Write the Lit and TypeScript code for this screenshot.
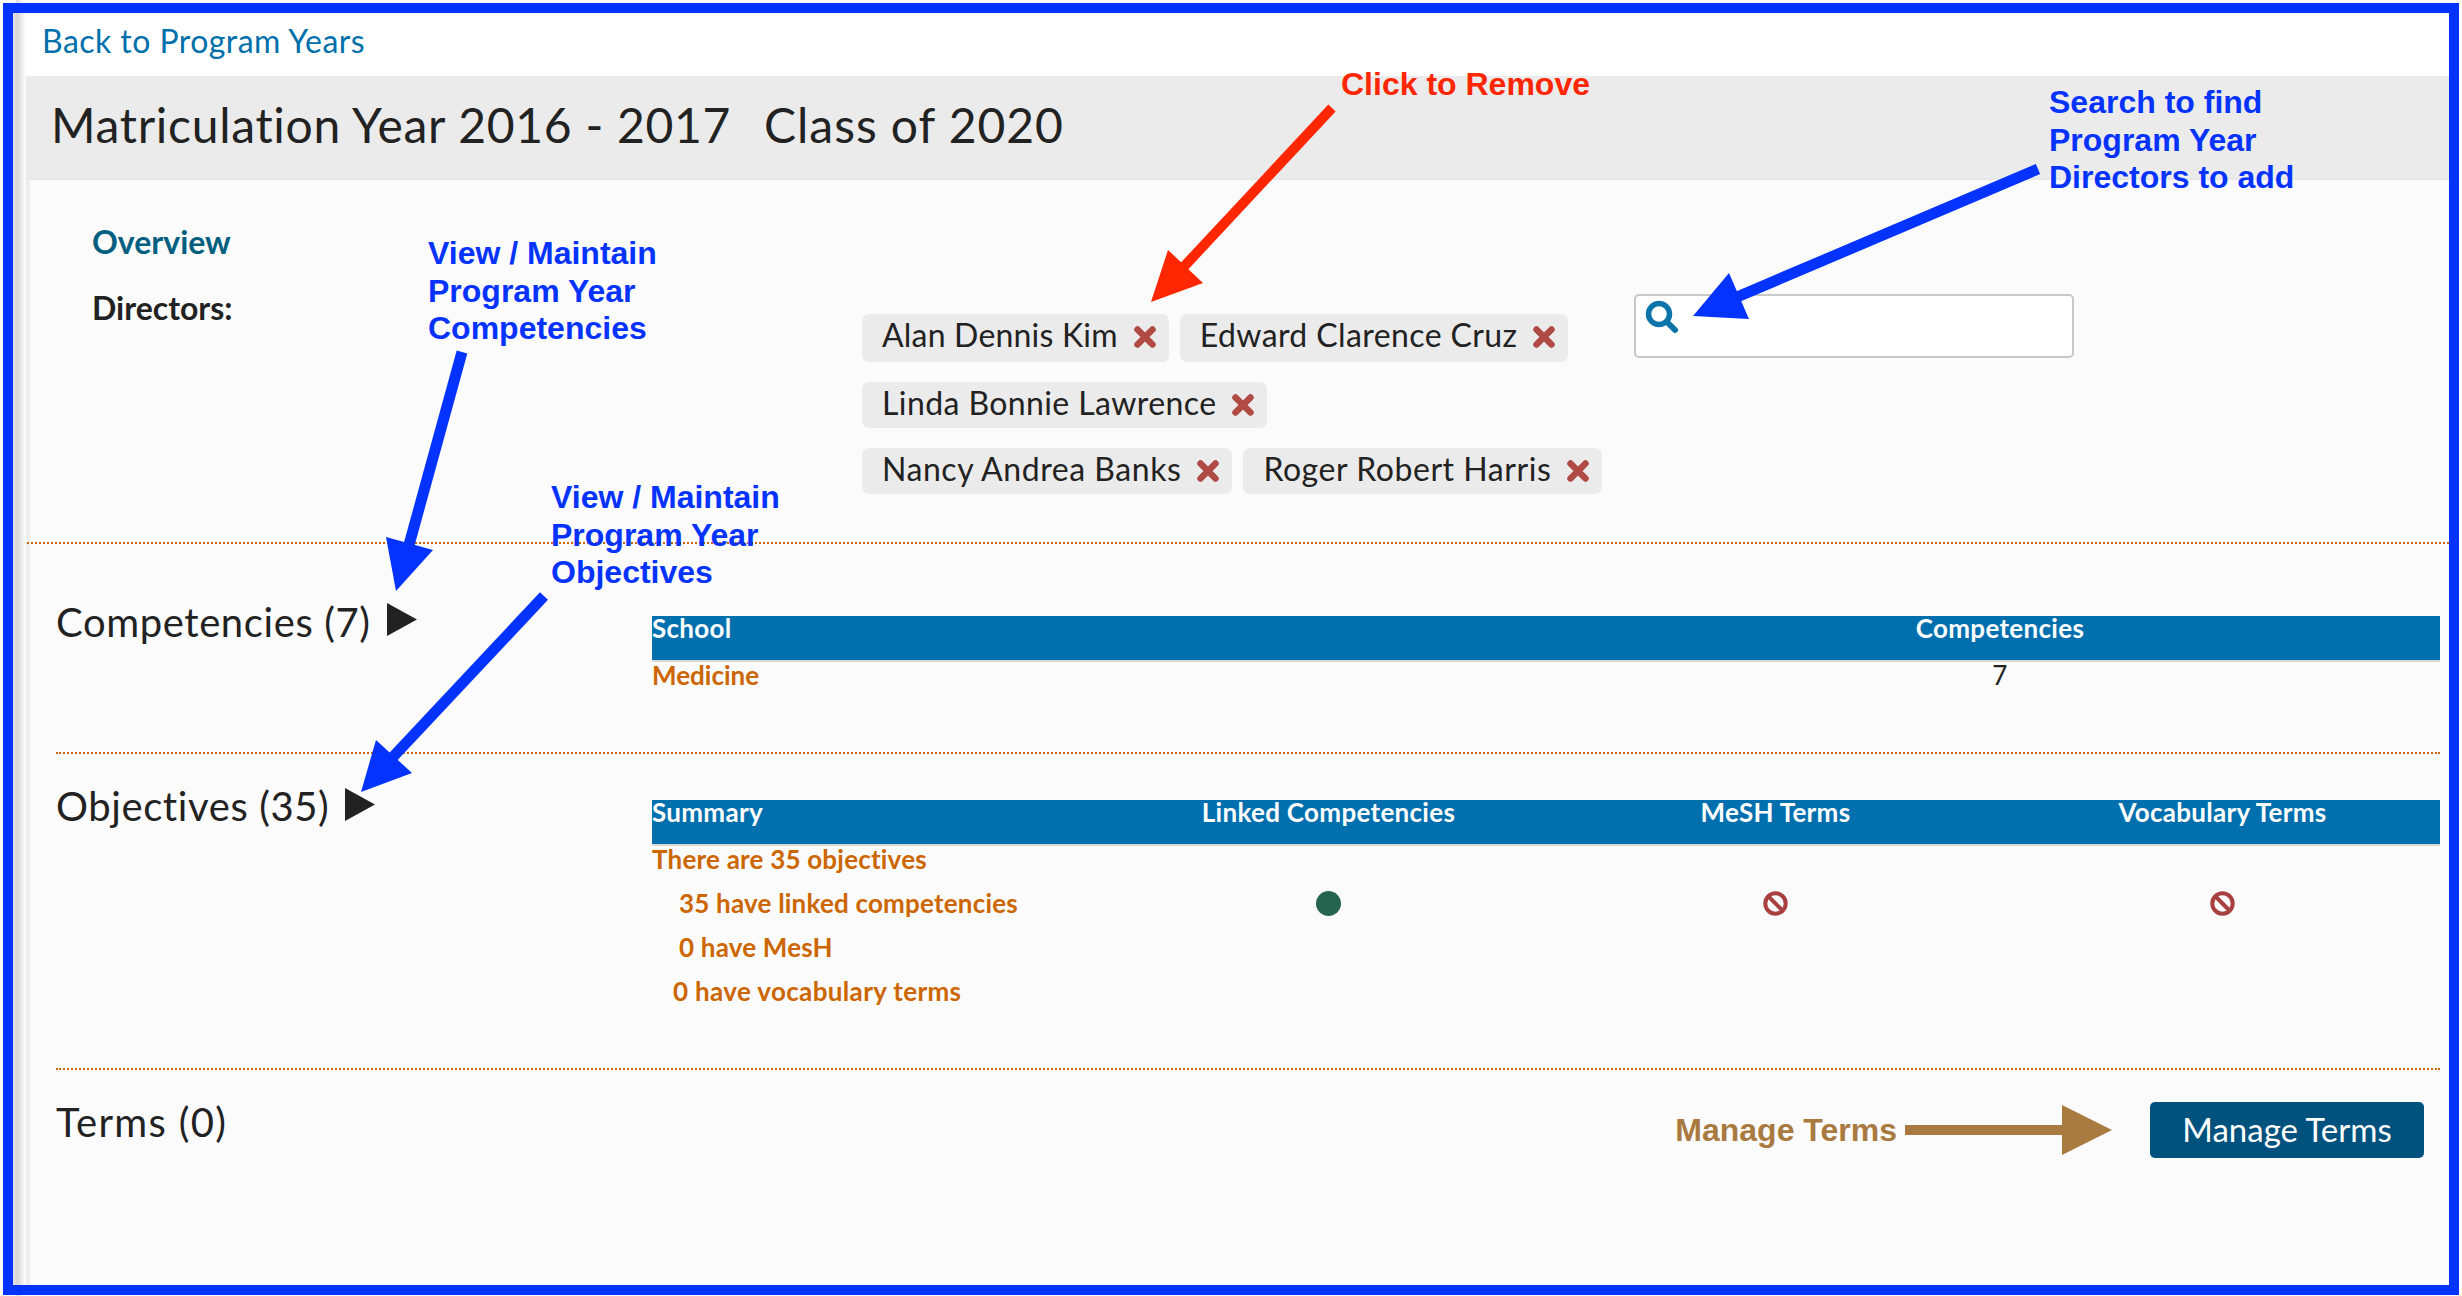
import { LitElement, html, css, svg } from "lit";
import { customElement } from "lit/decorators.js";
import { styleMap } from "lit/directives/style-map.js";

const BLUE = "#0433ff";
const RED = "#ff2600";

const arrows = [
  { c: RED, w: 10, s: [1332, 108], e: [1178, 273], h: "1151,302 1168,250 1203,283" },
  { c: BLUE, w: 11, s: [2038, 169], e: [1730, 300], h: "1693,316 1729,273 1749,319" },
  { c: BLUE, w: 11, s: [462, 352], e: [409, 545], h: "396,591 386,537 433,550" },
  { c: BLUE, w: 11, s: [544, 596], e: [392, 758], h: "361,792 376,740 412,773" },
];

const tagRows = [
  { tall: true, names: [{ n: "Alan Dennis Kim", s: 0.2 }, { n: "Edward Clarence Cruz", s: 0.4 }] },
  { tall: false, names: [{ n: "Linda Bonnie Lawrence", s: 0.4 }] },
  { tall: false, names: [{ n: "Nancy Andrea Banks", s: 0.55 }, { n: "Roger Robert Harris", s: 0.55 }] },
];

@customElement("app-root")
export class AppRoot extends LitElement {
  static styles = css`
    :host {
      display: block;
      position: relative;
      width: 2462px;
      height: 1296px;
      overflow: hidden;
      background: linear-gradient(90deg, #fff 15px, #ddd 17px, #fff 24px);
      font-family: Lato, "Noto Sans", sans-serif;
      color: #222;
    }
    .frame {
      box-sizing: border-box;
      width: 2456px;
      height: 1292px;
      margin: 3px 0 0 3px;
      border: 10px solid #0433ff;
      display: flex;
      background: #fff;
    }
    .gutter {
      width: 13px;
      flex: none;
      background: linear-gradient(90deg, #e4e4e4 0, #d4d4d4 4px, #fff 13px);
    }
    .main { flex: 1; display: flex; flex-direction: column; min-width: 0; }
    .back {
      height: 63px;
      box-sizing: border-box;
      padding: 9px 0 0 16px;
      font-size: 32px;
      letter-spacing: 0.45px;
      line-height: 38px;
      color: #0070ab;
    }
    .title {
      box-sizing: border-box;
      height: 104px;
      background: #ebebeb;
      border-bottom: 2px dotted #e2e2e2;
      padding: 0 0 5px 25px;
      display: flex;
      gap: 33px;
      align-items: center;
      font-size: 48px;
      letter-spacing: 0.7px;
      line-height: 90px;
      white-space: pre;
    }
    .cls { letter-spacing: 0.95px; }
    .body {
      flex: 1;
      background: #fbfbfb;
      box-shadow: inset 4px 0 0 #eee;
      display: flex;
      flex-direction: column;
    }
    .overview {
      box-sizing: border-box;
      height: 364px;
      border-bottom: 2px dotted #cc6600;
      margin-left: 1px;
      display: grid;
      grid-template-columns: 835px 772px 440px;
    }
    .labels { padding: 40px 0 0 65px; font-weight: 700; font-size: 32px; line-height: 44px; }
    .labels .ov { color: #005f7f; margin-bottom: 22px; }
    .tags { padding-top: 134px; display: flex; flex-direction: column; gap: 20px; }
    .tag-row { display: flex; gap: 11px; }
    .tag {
      box-sizing: border-box;
      height: 46px;
      padding: 0 13px 5px 20px;
      display: flex;
      align-items: center;
      gap: 16px;
      background: #ebebeb;
      border-radius: 7px;
      font-size: 32px;
    }
    .tall .tag { height: 48px; padding-bottom: 7px; }
    .x { width: 22px; height: 22px; flex: none; margin-top: 5px; }
    .search {
      margin-top: 114px;
      box-sizing: border-box;
      height: 64px;
      background: #fff;
      border: 2px solid #c8c8c8;
      border-radius: 5px;
      padding: 4px 0 0 9px;
    }
    .search svg { display: block; width: 34px; height: 34px; }

    .section {
      box-sizing: border-box;
      margin: 0 9px 0 30px;
      border-bottom: 2px dotted #cc6600;
      display: grid;
      grid-template-columns: 596px 1fr;
      align-items: start;
    }
    .comp { height: 210px; padding-top: 56px; }
    .comp .table { margin-top: 16px; }
    .obj { height: 316px; padding-top: 30px; }
    .obj .table { margin-top: 16px; }
    .obj .heading svg { margin-top: -4px; }
    .heading {
      display: flex;
      align-items: center;
      gap: 16px;
      font-size: 40px;
      letter-spacing: 0.6px;
      line-height: 44px;
      white-space: nowrap;
    }
    .heading svg { width: 30px; height: 33px; margin-top: -6px; flex: none; }

    .thead {
      display: grid;
      height: 46px;
      box-sizing: border-box;
      background: #006fae;
      border-bottom: 2px solid #d8d8d8;
      background-clip: padding-box;
      color: #fff;
      font-weight: 700;
      font-size: 26px;
      letter-spacing: 0.3px;
      line-height: 25px;
    }
    .tbody { margin-top: -9px; }
    .trow {
      display: grid;
      height: 44px;
      align-items: center;
      font-weight: 700;
      font-size: 26px;
      letter-spacing: 0.2px;
      color: #cc6600;
    }
    .c-grid { grid-template-columns: 908px 1fr; }
    .o-grid { grid-template-columns: 453px 447px 447px 1fr; }
    .cell { text-align: center; }
    .last { padding-left: 6px; }
    .plain { font-weight: 400; color: #222; }
    .tight { letter-spacing: 0; }
    .ind { padding-left: 27px; }
    .ind2 { padding-left: 21px; letter-spacing: 0.35px; }
    .dot, .no { display: block; margin: 0 auto; width: 25px; height: 25px; }

    .terms {
      box-sizing: border-box;
      margin: 0 25px 0 30px;
      padding-top: 30px;
      display: flex;
      justify-content: space-between;
      align-items: flex-start;
    }
    .terms .heading { gap: 0; letter-spacing: 1.3px; }
    .manage { margin-top: 2px; display: flex; align-items: center; }
    .manage-label {
      font-family: "Liberation Sans", Arial, sans-serif;
      font-weight: 700;
      font-size: 32px;
      color: #a97a40;
      margin-right: 8px;
    }
    .manage-arrow { width: 207px; height: 50px; margin-right: 38px; flex: none; }
    .btn {
      box-sizing: border-box;
      width: 274px;
      height: 56px;
      padding-bottom: 2px;
      border-radius: 5px;
      background: #00527e;
      color: #fff;
      font-size: 33px;
      display: flex;
      align-items: center;
      justify-content: center;
    }

    .overlay { position: absolute; left: 0; top: 0; width: 2462px; height: 1296px; pointer-events: none; }
    .note {
      position: absolute;
      font-family: "Liberation Sans", Arial, sans-serif;
      font-weight: 700;
      font-size: 32px;
      line-height: 37.5px;
      white-space: pre;
      color: #0433ff;
    }
    .n-remove { left: 1341px; top: 66px; color: #ff2600; }
    .n-search { left: 2049px; top: 84px; }
    .n-comp { left: 428px; top: 235px; }
    .n-obj { left: 551px; top: 479px; }
  `;

  private tri() {
    return html`<svg viewBox="0 0 30 33"><polygon points="0,0 30,16.5 0,33" fill="#222" /></svg>`;
  }

  private no() {
    return html`<svg class="no" viewBox="0 0 25 25">
      <circle cx="12.5" cy="12.5" r="10.2" fill="none" stroke="#a8403f" stroke-width="4" />
      <line x1="5.5" y1="5.5" x2="19.5" y2="19.5" stroke="#a8403f" stroke-width="4" />
    </svg>`;
  }

  render() {
    return html`
      <div class="frame">
        <div class="gutter"></div>
        <div class="main">
          <div class="back">Back to Program Years</div>
          <div class="title"><span>Matriculation Year 2016 - 2017</span><span class="cls">Class of 2020</span></div>
          <div class="body">
            <div class="overview">
              <div class="labels">
                <div class="ov">Overview</div>
                <div>Directors:</div>
              </div>
              <div class="tags">
                ${tagRows.map(
                  (r) => html`<div class="tag-row ${r.tall ? "tall" : ""}">
                    ${r.names.map(
                      (t) => html`<div class="tag">
                        <span style=${styleMap({ letterSpacing: `${t.s}px` })}>${t.n}</span>
                        <svg class="x" viewBox="0 0 22 22">
                          <path d="M3.5 3.5 18.5 18.5M18.5 3.5 3.5 18.5" stroke="#b04a45" stroke-width="6.5" stroke-linecap="round" />
                        </svg>
                      </div>`
                    )}
                  </div>`
                )}
              </div>
              <div class="search">
                <svg viewBox="0 0 34 34">
                  <circle cx="14" cy="14" r="10.5" fill="none" stroke="#0b74a8" stroke-width="5.5" />
                  <line x1="22" y1="22" x2="30" y2="30" stroke="#0b74a8" stroke-width="6" stroke-linecap="round" />
                </svg>
              </div>
            </div>

            <div class="section comp">
              <div class="heading"><span>Competencies (7)</span>${this.tri()}</div>
              <div class="table">
                <div class="thead c-grid"><div>School</div><div class="cell">Competencies</div></div>
                <div class="tbody">
                  <div class="trow c-grid"><div class="tight">Medicine</div><div class="cell plain">7</div></div>
                </div>
              </div>
            </div>

            <div class="section obj">
              <div class="heading"><span>Objectives (35)</span>${this.tri()}</div>
              <div class="table">
                <div class="thead o-grid">
                  <div>Summary</div>
                  <div class="cell">Linked Competencies</div>
                  <div class="cell">MeSH Terms</div>
                  <div class="cell last">Vocabulary Terms</div>
                </div>
                <div class="tbody">
                  <div class="trow o-grid"><div>There are 35 objectives</div></div>
                  <div class="trow o-grid">
                    <div class="ind">35 have linked competencies</div>
                    <div><svg class="dot" viewBox="0 0 25 25"><circle cx="12.5" cy="12.5" r="12.5" fill="#25644f" /></svg></div>
                    <div>${this.no()}</div>
                    <div class="last">${this.no()}</div>
                  </div>
                  <div class="trow o-grid"><div class="ind">0 have MesH</div></div>
                  <div class="trow o-grid"><div class="ind2">0 have vocabulary terms</div></div>
                </div>
              </div>
            </div>

            <div class="terms">
              <div class="heading"><span>Terms (0)</span></div>
              <div class="manage">
                <span class="manage-label">Manage Terms</span>
                <svg class="manage-arrow" viewBox="0 0 207 50">
                  <polygon points="0,20 157,20 157,0 207,25 157,50 157,30 0,30" fill="#a97a40" />
                </svg>
                <div class="btn">Manage Terms</div>
              </div>
            </div>
          </div>
        </div>
      </div>

      <svg class="overlay" viewBox="0 0 2462 1296">
        ${arrows.map(
          (a) => svg`<line x1=${a.s[0]} y1=${a.s[1]} x2=${a.e[0]} y2=${a.e[1]} stroke=${a.c} stroke-width=${a.w} />
            <polygon points=${a.h} fill=${a.c} />`
        )}
      </svg>
      <div class="note n-remove">Click to Remove</div>
      <div class="note n-search">Search to find
Program Year
Directors to add</div>
      <div class="note n-comp">View / Maintain
Program Year
Competencies</div>
      <div class="note n-obj">View / Maintain
Program Year
Objectives</div>
    `;
  }
}
